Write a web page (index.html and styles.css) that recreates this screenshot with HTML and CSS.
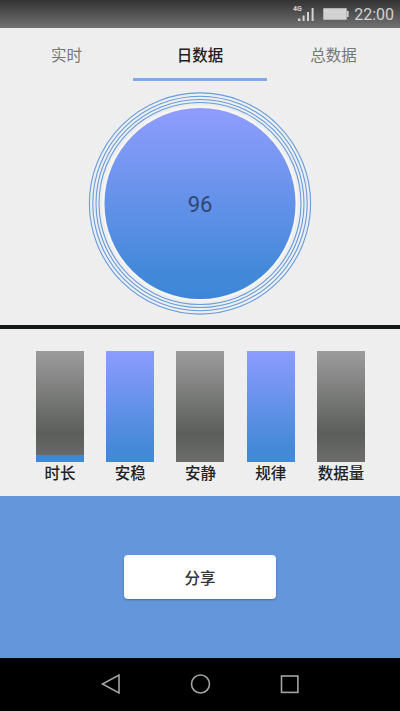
FILE: index.html
```html
<!DOCTYPE html>
<html lang="zh-CN">
<head>
    <meta charset="UTF-8">
    <meta name="viewport" content="width=device-width, initial-scale=1.0">
    <title>日数据</title>
    <link rel="stylesheet" href="styles.css">
</head>
<body>
    <div class="status">
        <svg class="signal" width="24" height="18" viewBox="0 0 24 18">
            <text x="0" y="6" class="net">4G</text>
            <rect x="5" y="13.5" width="2.4" height="2.5"/>
            <rect x="9.6" y="10.5" width="2" height="5.5"/>
            <rect x="14" y="7" width="2" height="9"/>
            <rect x="18.6" y="3" width="2" height="13"/>
        </svg>
        <svg class="battery" width="26" height="12" viewBox="0 0 26 12">
            <rect x="0.5" y="0.5" width="23" height="11" rx="0.5" class="shell"/>
            <rect x="24" y="3" width="1.6" height="6"/>
        </svg>
        <span class="time">22:00</span>
    </div>
    <div class="tabs">
        <div class="tab">实时</div>
        <div class="tab active">日数据</div>
        <div class="tab">总数据</div>
    </div>
    <div class="score">
        <svg class="dial" width="224" height="224" viewBox="0 0 224 224">
            <defs>
                <linearGradient id="dialFill" x1="0" y1="0" x2="0" y2="1">
                    <stop offset="0" stop-color="#8f9dff"/>
                    <stop offset="0.85" stop-color="#4489d9"/>
                    <stop offset="1" stop-color="#3d86d7"/>
                </linearGradient>
            </defs>
            <circle cx="112" cy="111.5" r="98" class="rim"/>
            <circle cx="112" cy="111.5" r="110.6" class="ring"/>
            <circle cx="112" cy="111.5" r="107.2" class="ring"/>
            <circle cx="112" cy="111.5" r="104" class="ring"/>
            <circle cx="112" cy="111.5" r="101" class="ring"/>
            <circle cx="112" cy="111.5" r="95.5" fill="url(#dialFill)"/>
            <text x="112" y="120" class="num">96</text>
        </svg>
    </div>
    <div class="bars">
        <div class="item"><div class="bar"><div class="fill" style="height: 7px"></div></div><span>时长</span></div>
        <div class="item"><div class="bar full"></div><span>安稳</span></div>
        <div class="item"><div class="bar"></div><span>安静</span></div>
        <div class="item"><div class="bar full"></div><span>规律</span></div>
        <div class="item"><div class="bar"></div><span>数据量</span></div>
    </div>
    <div class="share">
        <button class="btn">分享</button>
    </div>
    <div class="nav">
        <svg width="22" height="24" viewBox="0 0 22 24"><path d="M2.5 12 L19 3 V21 Z"/></svg>
        <svg width="22" height="24" viewBox="0 0 22 24"><circle cx="11.5" cy="12" r="9"/></svg>
        <svg width="22" height="24" viewBox="0 0 22 24"><rect x="3.5" y="4" width="16.4" height="16.4"/></svg>
    </div>
</body>
</html>
```
FILE: styles.css
```css
*{
    margin: 0;
    padding: 0;
    box-sizing: border-box;
}
body{
    width: 400px;
    height: 711px;
    overflow: hidden;
    display: flex;
    flex-direction: column;
    background: #eeeeee;
    font-family: Roboto, "Noto Sans CJK SC", sans-serif;
}
/* 状态栏 */
.status{
    height: 28px;
    display: flex;
    justify-content: flex-end;
    align-items: center;
    padding-right: 6px;
    background: linear-gradient(#333333, #727272);
    color: #d2d2d2;
}
.status svg{
    fill: #d2d2d2;
}
.signal{
    margin-right: 6px;
}
.net{
    font-size: 7px;
    font-weight: bold;
}
.battery{
    margin-right: 5px;
}
.battery .shell{
    stroke: #b4b4b4;
}
.time{
    font-size: 16px;
    line-height: 28px;
    padding-top: 1px;
}
/* 标签 */
.tabs{
    height: 54px;
    display: grid;
    grid-template-columns: 133px 134px 133px;
}
.tab{
    height: 53px;
    text-align: center;
    font-size: 15.5px;
    line-height: 56px;
    color: #777777;
}
.tab.active{
    color: #222222;
    font-weight: 500;
    border-bottom: 3px solid #80aae5;
}
/* 分数 */
.score{
    height: 243px;
    padding-top: 10px;
    text-align: center;
}
.dial{
    display: block;
    margin: 0 auto;
}
.ring{
    fill: none;
    stroke: #659ce0;
    stroke-width: 1.1;
}
.rim{
    fill: #f5f5f3;
}
.num{
    font-size: 22px;
    text-anchor: middle;
    fill: #2e4872;
}
/* 柱状 */
.bars{
    height: 171px;
    padding: 22px 24px 0 25px;
    border-top: 4px solid #121616;
    display: grid;
    grid-template-columns: repeat(5, 1fr);
}
.item{
    display: flex;
    flex-direction: column;
    align-items: center;
    font-size: 15.5px;
    line-height: 25px;
    font-weight: 500;
    color: #222222;
}
.bar{
    width: 48px;
    height: 111px;
    display: flex;
    flex-direction: column;
    justify-content: flex-end;
    background: linear-gradient(#9c9c9c, #5a5d59 75%, #6d6e6c);
}
.bar.full{
    background: linear-gradient(#8c9cff, #4489d8 88%, #4389d8);
}
.fill{
    background: #3e87da;
}
/* 分享 */
.share{
    height: 162px;
    padding-top: 59px;
    background: #6496db;
    text-align: center;
}
.btn{
    width: 152px;
    height: 44px;
    border: none;
    border-radius: 4px;
    background: #ffffff;
    box-shadow: 0 1px 2px rgba(0,0,0,0.3);
    color: #333333;
    font-family: inherit;
    font-size: 15.5px;
    font-weight: 500;
}
/* 导航栏 */
.nav{
    height: 53px;
    padding-bottom: 1px;
    display: flex;
    justify-content: center;
    align-items: center;
    gap: 67px;
    background: #000000;
}
.nav svg{
    fill: none;
    stroke: #a3a3a3;
    stroke-width: 1.6;
}
```
